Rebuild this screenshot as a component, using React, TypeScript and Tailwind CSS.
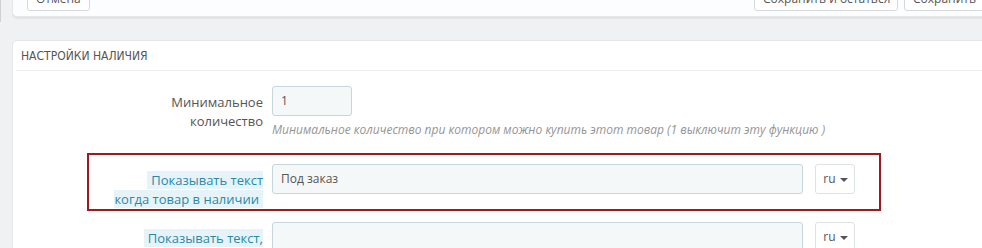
import React from 'react';

const labelText = 'text-[13px] leading-[18.57px] text-[#555]';

const LangButton: React.FC = () => (
  <button className="ml-[12px] flex h-[30px] w-[40px] shrink-0 items-center justify-center gap-[4px] rounded-[3px] border border-[#dde2e5] bg-white pl-[1px] text-[12px] text-[#555]">
    <span>ru</span>
    <span className="mt-[1px] h-0 w-0 border-x-[4px] border-t-[4px] border-x-transparent border-t-[#555]" />
  </button>
);

const TranslatedLabel: React.FC<{ text: string }> = ({ text }) => (
  <div className={`ml-auto w-[152px] pt-[7px] text-right ${labelText}`}>
    <span className="bg-[#e6f4f9] px-[4px] text-[#2a89a6]">{text}</span>
  </div>
);

const footerBtn =
  'h-[29px] whitespace-nowrap rounded-[3px] border border-[#d6d9db] bg-white px-[8px] pt-[5px] text-[12px] text-[#555]';

const App: React.FC = () => {
  return (
    <div className="flex h-[248px] w-full overflow-hidden bg-[#eff1f2] font-['Open_Sans',sans-serif]">
      {/* sidebar edge */}
      <div className="h-[22px] w-px shrink-0 bg-[#cfd2d4]" />

      <div className="w-[998px] shrink-0 pl-[11px]">
        {/* footer of the previous panel */}
        <div className="-mt-[29px] flex items-start justify-between rounded-b-[5px] border border-[#e6e6e6] bg-[#fcfdfe] px-[14px] pb-[5px] pt-[10px] shadow-[0_2px_0_rgba(0,0,0,0.05)]">
          <button className={footerBtn}>Отмена</button>
          <div className="flex gap-[6px]">
            <button className={`${footerBtn} w-[144px]`}>Сохранить и остаться</button>
            <button className={`${footerBtn} w-[80px]`}>Сохранить</button>
          </div>
        </div>

        {/* availability panel */}
        <div className="mt-[23px] h-[300px] rounded-[5px] border border-[#e6e6e6] bg-white shadow-[0_2px_0_rgba(0,0,0,0.05)]">
          <div className="ml-[3px] flex h-[30px] items-center border-b border-[#eee] pl-[5px] font-['DejaVu_Sans_Condensed','DejaVu_Sans',sans-serif] text-[12px] uppercase text-[#555] [font-stretch:condensed]">
            Настройки наличия
          </div>

          <div className="mt-[15px]">
            {/* minimal quantity */}
            <div className="flex items-start">
              <div className="w-[250px] shrink-0">
                <div className={`ml-auto w-[155px] pt-[7px] text-right ${labelText}`}>
                  Минимальное количество
                </div>
              </div>
              <div className="ml-[9px]">
                <div className="flex h-[30px] w-[80px] items-center rounded-[3px] border border-[#c7d6db] bg-[#f5f8f9] px-[8px] text-[12px] text-[#555]">
                  1
                </div>
                <p className="mt-[5px] text-[12px] italic leading-[17px] text-[#959595]">
                  Минимальное количество при котором можно купить этот товар (1 выключит эту функцию )
                </p>
              </div>
            </div>

            {/* highlighted row */}
            <div className="ml-[74px] mt-[15px] w-[794px] border-2 border-[#9d1a20] pb-[1px] pt-[9px]">
              <div className="flex items-start">
                <div className="w-[174px] shrink-0">
                  <TranslatedLabel text="Показывать текст когда товар в наличии" />
                </div>
                <div className="ml-[9px] flex h-[30px] w-[531px] items-center rounded-[3px] border border-[#c7d6db] bg-[#f5f8f9] px-[8px] text-[12px] text-[#555]">
                  Под заказ
                </div>
                <LangButton />
              </div>
            </div>

            {/* out of stock row */}
            <div className="mt-[11px] flex items-start">
              <div className="w-[250px] shrink-0">
                <TranslatedLabel text="Показывать текст, когда товара нет в наличии" />
              </div>
              <div className="ml-[9px] h-[30px] w-[531px] rounded-[3px] border border-[#c7d6db] bg-[#f5f8f9]" />
              <LangButton />
            </div>
          </div>
        </div>
      </div>
    </div>
  );
};

export default App;
